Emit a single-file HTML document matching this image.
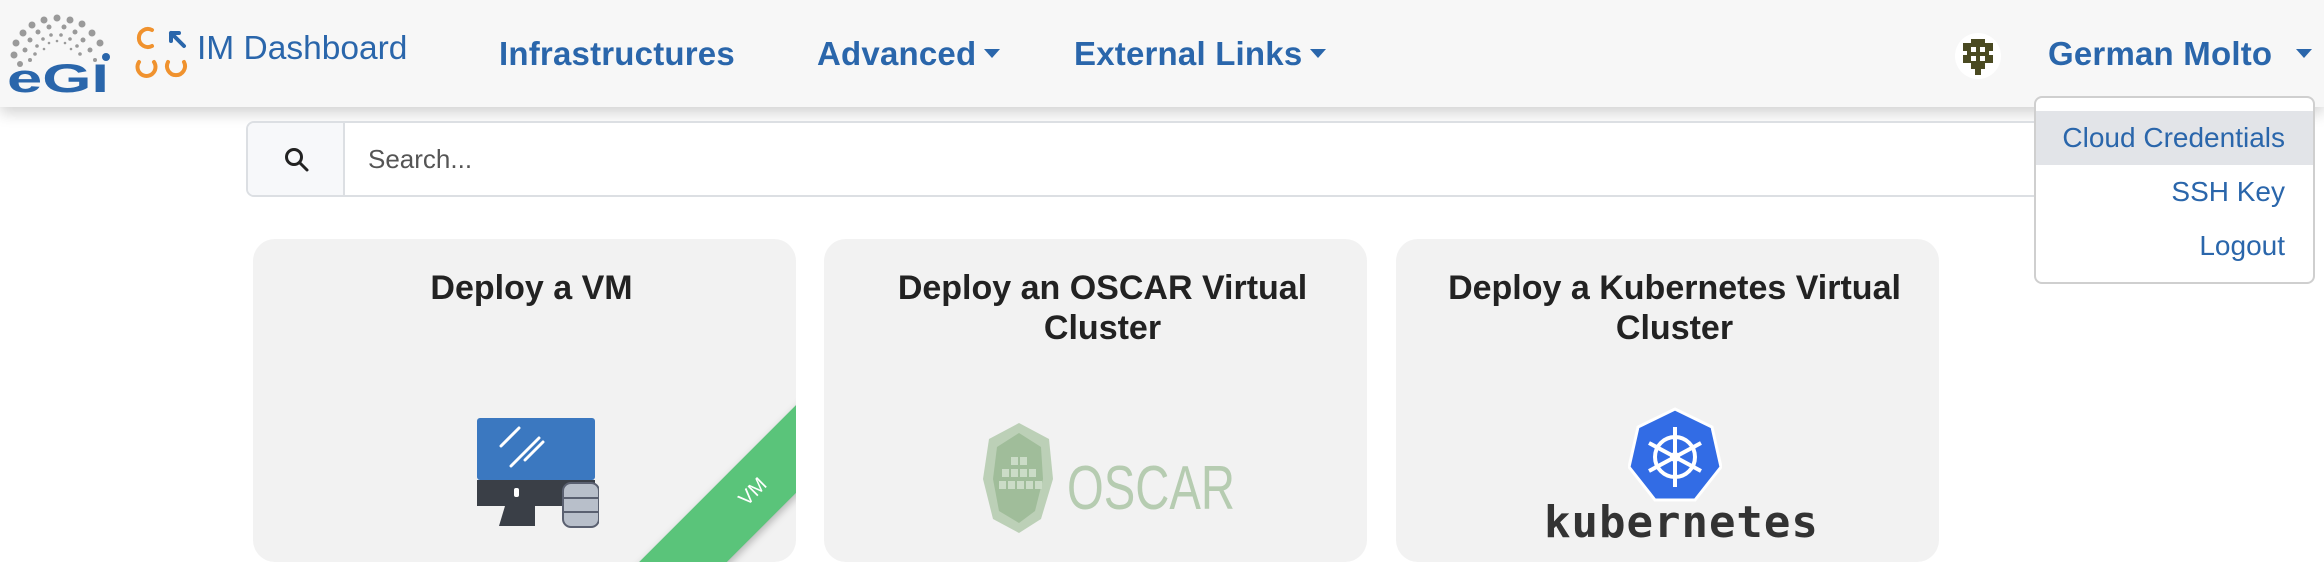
<!DOCTYPE html>
<html><head><meta charset="utf-8"><style>
*{box-sizing:border-box;margin:0;padding:0}
html,body{width:2324px;height:582px;overflow:hidden}
body{background:#fff;font-family:"Liberation Sans",sans-serif;position:relative}
.nav{position:absolute;left:0;top:0;width:2324px;height:107px;background:#f7f7f7;box-shadow:0 6px 14px rgba(0,0,0,.18)}
.a{position:absolute;color:#2a66ab;font-weight:bold;font-size:33px;top:35px;letter-spacing:0.2px}
.caret{display:inline-block;width:0;height:0;border-left:8px solid transparent;border-right:8px solid transparent;border-top:9px solid #2a66ab;vertical-align:middle;margin-left:8px;margin-top:-6px}
.search{position:absolute;left:246px;top:121px;width:1832px;height:76px;border:2px solid #dcdfe3;border-radius:8px;background:#fff}
.sbtn{position:absolute;left:0;top:0;width:97px;height:72px;background:#f7f8fa;border-right:2px solid #dcdfe3;border-radius:6px 0 0 6px}
.card{position:absolute;top:239px;width:543px;height:323px;background:#f2f2f2;border-radius:22px;overflow:hidden}
.t{position:absolute;left:14px;right:0;top:29px;text-align:center;font-weight:bold;font-size:34px;line-height:40px;color:#222}
.dd{position:absolute;left:2034px;top:96px;width:281px;height:188px;background:#fff;border:2px solid #cfcfcf;border-radius:8px}
.di{position:absolute;right:28px;font-size:28px;color:#2a66ab}
</style></head><body>
<div class="nav">
<svg style="position:absolute;left:5px;top:14px" width="110" height="80" viewBox="0 0 110 80">
<g fill="#9a9a9a">
<circle cx="39" cy="6" r="3.5"/><circle cx="52" cy="4" r="3.5"/><circle cx="65" cy="6" r="3.5"/><circle cx="77" cy="10" r="3.5"/>
<circle cx="27" cy="11" r="3.5"/><circle cx="18" cy="19" r="3.5"/><circle cx="87" cy="19" r="3.5"/><circle cx="11" cy="29" r="3.5"/><circle cx="95" cy="29" r="3.5"/>
<circle cx="9" cy="41" r="3.5"/><circle cx="15" cy="50" r="3"/>
<circle cx="44" cy="13" r="2.5"/><circle cx="59" cy="13" r="2.5"/><circle cx="33" cy="18" r="2.5"/><circle cx="70" cy="18" r="2.5"/><circle cx="25" cy="26" r="2.5"/><circle cx="78" cy="26" r="2.5"/><circle cx="20" cy="36" r="2.5"/><circle cx="85" cy="36" r="2.5"/><circle cx="25" cy="46" r="2"/><circle cx="90" cy="46" r="2"/>
<circle cx="46" cy="21" r="1.8"/><circle cx="56" cy="21" r="1.8"/><circle cx="38" cy="25" r="1.8"/><circle cx="65" cy="25" r="1.8"/><circle cx="32" cy="32" r="1.8"/><circle cx="72" cy="32" r="1.8"/><circle cx="30" cy="40" r="1.8"/><circle cx="75" cy="40" r="1.8"/>
<circle cx="52" cy="27" r="1.3"/><circle cx="44" cy="29" r="1.3"/><circle cx="60" cy="29" r="1.3"/><circle cx="39" cy="35" r="1.3"/><circle cx="66" cy="35" r="1.3"/>
</g>
<circle cx="101" cy="43" r="4" fill="#2a66ab"/>
<text x="2" y="78" font-family="Liberation Sans" font-weight="bold" font-size="40" fill="#2a66ab" textLength="102" lengthAdjust="spacingAndGlyphs">eGI</text>
</svg>
<svg style="position:absolute;left:134px;top:26px" width="56" height="56" viewBox="0 0 56 56" fill="none" stroke-width="4" stroke-linecap="round">
<path d="M18 4 A9 9 0 1 0 18 20" stroke="#f0922e"/>
<path d="M5 36 A9 9 0 1 0 20 36" stroke="#f0922e"/>
<path d="M34 36 A9 9 0 1 0 50 36" stroke="#f0922e"/>
<path d="M50 20 L37 7 M37 7 L37 15 M37 7 L45 7" stroke="#2a66ab"/>
</svg>
<div style="position:absolute;left:197px;top:30px;font-size:33.5px;color:#2a66ab">IM Dashboard</div>
<div class="a" style="left:499px">Infrastructures</div>
<div class="a" style="left:817px">Advanced<span class="caret"></span></div>
<div class="a" style="left:1074px">External Links<span class="caret"></span></div>
<svg style="position:absolute;left:1955px;top:33px" width="46" height="46" viewBox="0 0 46 46">
<circle cx="23" cy="23" r="23" fill="#fff"/>
<path d="M8 10h8v-4h14v4h8v8h-4v4h4v8h-8v6h-4v6h-6v-6h-4v-6h-8v-8h4v-4h-4z" fill="#4a4a22"/>
<g fill="#fff"><rect x="16" y="14" width="5" height="5"/><rect x="25" y="14" width="5" height="5"/><rect x="16" y="23" width="5" height="5"/><rect x="25" y="23" width="5" height="5"/></g>
</svg>
<div class="a" style="left:2048px">German Molto<span class="caret" style="margin-left:24px"></span></div>
</div>
<div class="search"><div class="sbtn">
<svg style="position:absolute;left:36px;top:24px" width="26" height="26" viewBox="0 0 26 26" fill="none" stroke="#222" stroke-width="3"><circle cx="10" cy="10" r="7.5"/><path d="M15.5 15.5L23 23" stroke-linecap="round"/></svg>
</div><div style="position:absolute;left:120px;top:21px;font-size:26px;color:#555">Search...</div></div>

<div class="card" style="left:253px"><div class="t">Deploy a VM</div>
<svg style="position:absolute;left:224px;top:179px" width="122" height="112" viewBox="0 0 122 112">
<rect x="0" y="0" width="118" height="62" rx="3" fill="#3b78c0"/>
<path d="M24 28l18-18M34 48l28-28M48 42l18-18" stroke="#fff" stroke-width="3" stroke-linecap="round"/>
<rect x="0" y="62" width="118" height="26" fill="#3a3f47"/>
<rect x="37" y="70" width="5" height="9" rx="2" fill="#fff"/>
<path d="M28 88h30v20h-36z" fill="#3a3f47"/>
<rect x="86" y="65" width="36" height="44" rx="8" fill="#b8bfca" stroke="#5a6070" stroke-width="2"/>
<path d="M86 80h36M86 94h36" stroke="#5a6070" stroke-width="2"/>
</svg>
<div style="position:absolute;left:340px;top:222px;width:320px;height:62px;background:#5ac47a;transform:rotate(-45deg);box-shadow:0 3px 8px rgba(0,0,0,.25);color:#fff;font-size:20px;text-align:center;line-height:62px">VM</div>
</div>
<div class="card" style="left:824px"><div class="t">Deploy an OSCAR Virtual<br>Cluster</div>
<svg style="position:absolute;left:155px;top:180px" width="260" height="116" viewBox="0 0 260 116">
<polygon points="40,4 70,20 74,60 62,100 40,114 14,100 4,60 10,20" fill="#a9c4a3" opacity=".75"/>
<polygon points="40,14 62,28 64,60 56,92 40,104 20,92 14,60 18,28" fill="#98b892" opacity=".8"/>
<g fill="#cbdcc7"><rect x="32" y="38" width="7" height="8"/><rect x="41" y="38" width="7" height="8"/><rect x="23" y="50" width="7" height="8"/><rect x="32" y="50" width="7" height="8"/><rect x="41" y="50" width="7" height="8"/><rect x="50" y="50" width="7" height="8"/><rect x="20" y="62" width="7" height="8"/><rect x="29" y="62" width="7" height="8"/><rect x="38" y="62" width="7" height="8"/><rect x="47" y="62" width="7" height="8"/><rect x="56" y="62" width="7" height="8"/></g>
<text x="88" y="90" font-family="Liberation Sans" font-size="62" fill="#b6ccb1" textLength="168" lengthAdjust="spacingAndGlyphs">OSCAR</text>
</svg>
</div>
<div class="card" style="left:1396px"><div class="t">Deploy a Kubernetes Virtual<br>Cluster</div>
<svg style="position:absolute;left:232px;top:168px" width="94" height="96" viewBox="0 0 94 96">
<polygon points="47,2 84,20 93,60 67,93 27,93 1,60 10,20" fill="#326ce5" stroke="#fff" stroke-width="3"/>
<g stroke="#fff" stroke-width="4" fill="none"><circle cx="47" cy="50" r="20"/><path d="M47 20v60M21 36l52 28M21 64l52-28"/></g>
<circle cx="47" cy="50" r="5" fill="#fff"/>
</svg>
<div style="position:absolute;left:148px;top:258px;font-family:'DejaVu Sans Mono','Liberation Mono',monospace;font-weight:bold;font-size:44px;color:#333;letter-spacing:1px">kubernetes</div>
</div>

<div class="dd">
<div style="position:absolute;left:0;right:0;top:13px;height:54px;background:#e2e4e8"></div>
<div class="di" style="top:24px">Cloud Credentials</div>
<div class="di" style="top:78px">SSH Key</div>
<div class="di" style="top:132px">Logout</div>
</div>
</body></html>
